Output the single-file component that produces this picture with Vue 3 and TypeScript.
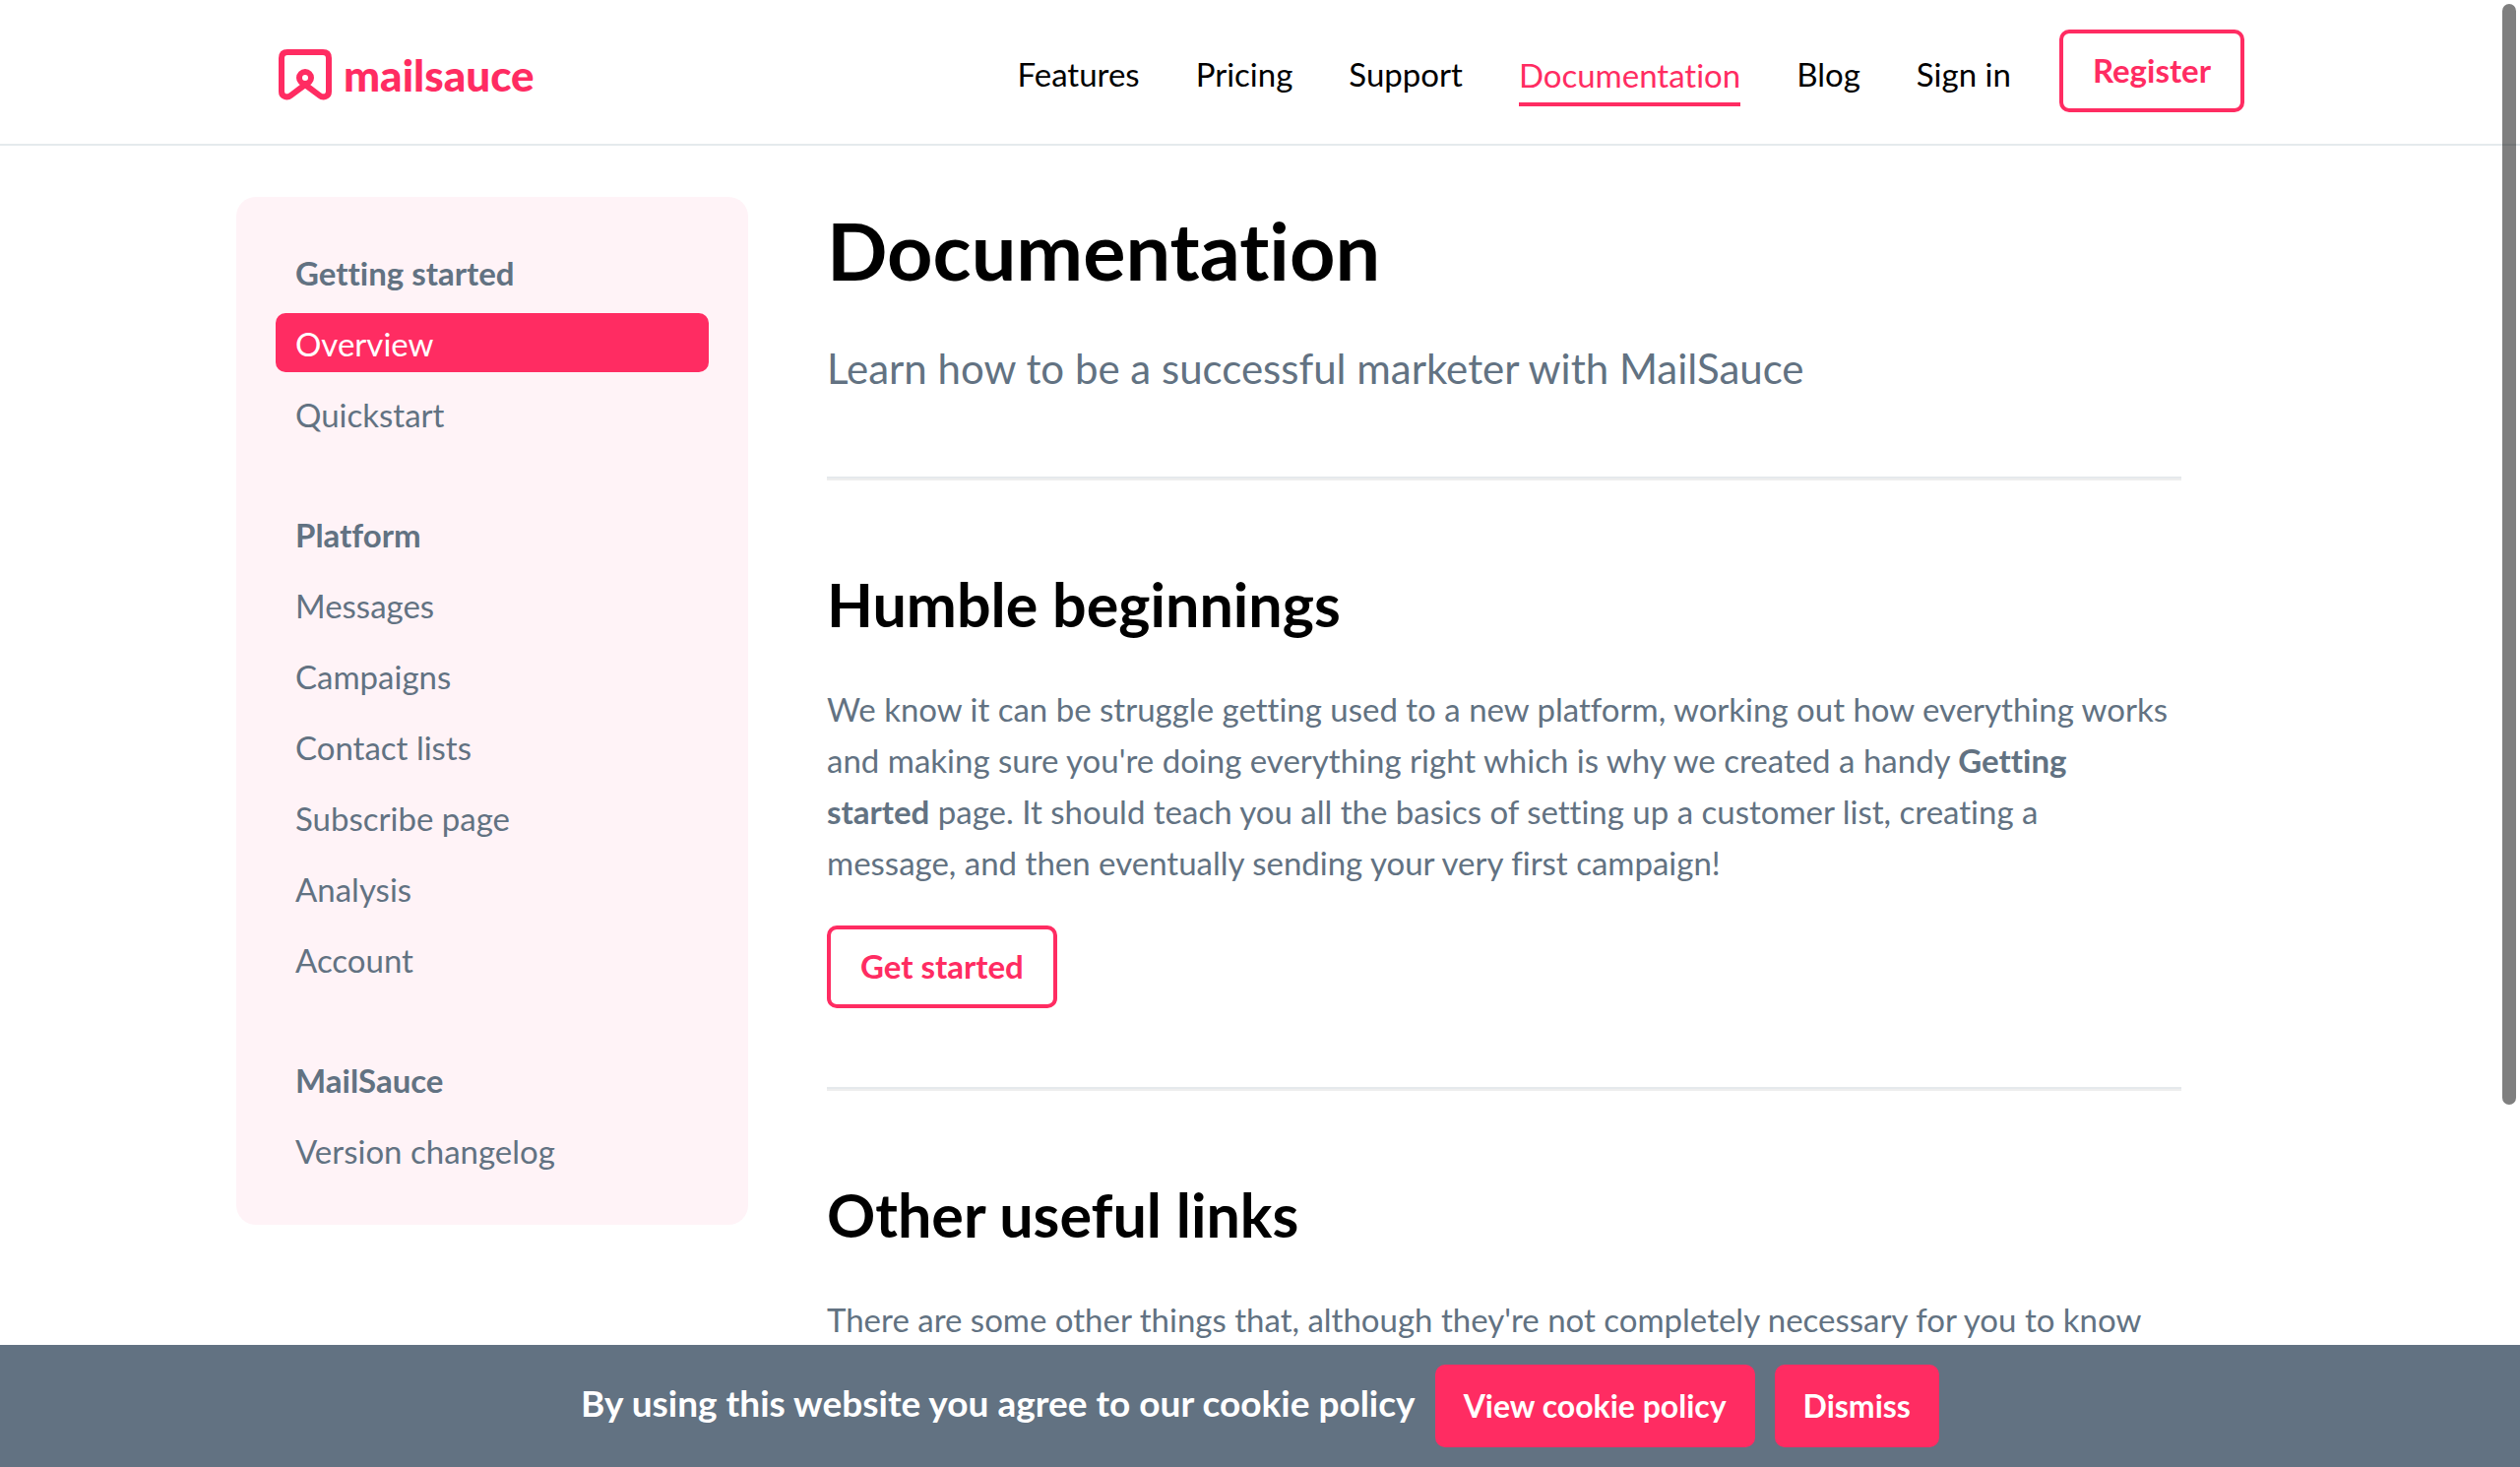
<script setup lang="ts">
interface NavGroup {
  title: string
  items: string[]
}

const navLinks: string[] = ['Features', 'Pricing', 'Support', 'Documentation', 'Blog', 'Sign in']
const activeNav = 'Documentation'

const groups: NavGroup[] = [
  { title: 'Getting started', items: ['Overview', 'Quickstart'] },
  {
    title: 'Platform',
    items: ['Messages', 'Campaigns', 'Contact lists', 'Subscribe page', 'Analysis', 'Account'],
  },
  { title: 'MailSauce', items: ['Version changelog'] },
]
const activeItem = 'Overview'
</script>

<template>
  <div class="page">
    <header class="header">
      <div class="header-inner">
        <a class="logo" href="#">
          <svg class="logo-mark" viewBox="0 0 54 52" aria-hidden="true">
            <path d="M27 36 L12.5 46.800 C8.500 50 3 48 3 43 V9 Q3 3 9 3 H45 Q51 3 51 9 V43 C51 48 45.500 50 41.500 46.800 Z" />
            <circle cx="27" cy="29" r="6" />
          </svg>
          <span>mailsauce</span>
        </a>
        <nav class="nav" aria-label="Main">
          <a
            v-for="link in navLinks"
            :key="link"
            href="#"
            class="nav-link"
            :class="{ active: link === activeNav }"
          >{{ link }}</a>
          <button type="button" class="btn outline register">Register</button>
        </nav>
      </div>
    </header>

    <div class="layout">
      <aside class="sidebar">
        <section v-for="group in groups" :key="group.title" class="group">
          <h4 class="group-title">{{ group.title }}</h4>
          <a
            v-for="item in group.items"
            :key="item"
            href="#"
            class="side-link"
            :class="{ active: item === activeItem }"
          >{{ item }}</a>
        </section>
      </aside>

      <main class="content">
        <h1>Documentation</h1>
        <p class="lead">Learn how to be a successful marketer with MailSauce</p>
        <hr />
        <h2>Humble beginnings</h2>
        <p class="text">
          We know it can be struggle getting used to a new platform, working out how everything works
          and making sure you're doing everything right which is why we created a handy
          <strong>Getting started</strong> page. It should teach you all the basics of setting up a
          customer list, creating a message, and then eventually sending your very first campaign!
        </p>
        <button type="button" class="btn outline">Get started</button>
        <hr />
        <h2>Other useful links</h2>
        <p class="text">
          There are some other things that, although they're not completely necessary for you to know
        </p>
      </main>
    </div>

    <div class="cookie" role="region" aria-label="Cookie notice">
      <span class="cookie-text">By using this website you agree to our cookie policy</span>
      <button type="button" class="btn solid">View cookie policy</button>
      <button type="button" class="btn solid">Dismiss</button>
    </div>

    <div class="scroll-thumb" aria-hidden="true"></div>
  </div>
</template>

<style>
body {
  margin: 0;
  background: #fff;
}
</style>

<style scoped>
.page {
  min-height: 100vh;
  overflow: hidden;
  font-family: Lato, "Open Sans", sans-serif;
  font-size: 33px;
  font-variant-ligatures: none;
  line-height: 52px;
  color: #627282;
}

a {
  color: inherit;
  text-decoration: none;
}

.header {
  border-bottom: 2px solid #e5eaed;
}

.header-inner {
  box-sizing: border-box;
  max-width: 2080px;
  margin: 0 auto;
  padding: 30px 40px 32px;
  display: flex;
  align-items: center;
  justify-content: space-between;
}

.logo {
  display: flex;
  align-items: center;
  gap: 12px;
  padding: 8px 0 0 3px;
  color: #ff2c62;
  font-size: 44px;
  font-weight: 900;
}

.logo-mark {
  width: 54px;
  height: 52px;
  fill: none;
  stroke: currentColor;
  stroke-width: 6;
  stroke-linejoin: round;
}

.nav {
  display: flex;
  align-items: center;
  gap: 57px;
}

.nav-link {
  padding-top: 5px;
  line-height: 40px;
  color: #000;
}

.nav-link.active {
  padding: 20px 0 8px;
  border-bottom: 4px solid #ff2c62;
  color: #ff2c62;
}

.btn {
  box-sizing: border-box;
  height: 84px;
  padding: 0 30px 2px;
  border: 4px solid #ff2c62;
  border-radius: 10px;
  font: inherit;
  font-variant-ligatures: none;
  font-weight: 700;
  white-space: nowrap;
}

.btn.outline {
  background: #fff;
  color: #ff2c62;
}

.btn.solid {
  padding: 0 25px;
  background: #ff2c62;
  font-size: 32px;
  color: #fff;
}

.register {
  margin-left: -8px;
}

.layout {
  box-sizing: border-box;
  max-width: 2080px;
  margin: 0 auto;
  padding: 52px 104px 0 0;
  display: flex;
  align-items: flex-start;
  gap: 80px;
}

.sidebar {
  box-sizing: border-box;
  flex: 0 0 25%;
  min-width: 520px;
  padding: 40px;
  border-radius: 20px;
  background: #fff3f7;
  display: flex;
  flex-direction: column;
  gap: 50px;
}

.group {
  display: flex;
  flex-direction: column;
}

.group-title,
.side-link {
  margin: 6px 0;
  padding: 2px 20px 0;
  border-radius: 10px;
  font-size: 33px;
  line-height: 58px;
}

.side-link.active {
  background: #ff2c62;
  color: #fff;
}

.content {
  flex: 1;
  min-width: 0;
}

h1 {
  margin: 0;
  font-size: 81px;
  line-height: 108px;
  color: #000;
}

.lead {
  margin: 36px 0 0;
  font-size: 42px;
  line-height: 60px;
}

hr {
  box-sizing: border-box;
  height: 4px;
  margin: 80px 0;
  border: solid #e5e9ec;
  border-width: 2px 0;
  border-bottom-color: #eee;
}

h2 {
  margin: 0;
  font-size: 61px;
  font-weight: 700;
  line-height: 92px;
  color: #000;
}

.text {
  margin: 34px 0 38px;
  padding-right: 10px;
}

.cookie {
  position: fixed;
  right: 0;
  bottom: 0;
  left: 0;
  padding: 20px;
  display: flex;
  align-items: center;
  justify-content: center;
  gap: 20px;
  background: #627282;
}

.cookie-text {
  padding-bottom: 6px;
  font-size: 37px;
  font-weight: 700;
  color: #fff;
}

.scroll-thumb {
  position: fixed;
  top: 4px;
  right: 4px;
  width: 14px;
  height: 75vh;
  border-radius: 7px;
  background: rgba(0, 0, 0, 0.5);
}
</style>
